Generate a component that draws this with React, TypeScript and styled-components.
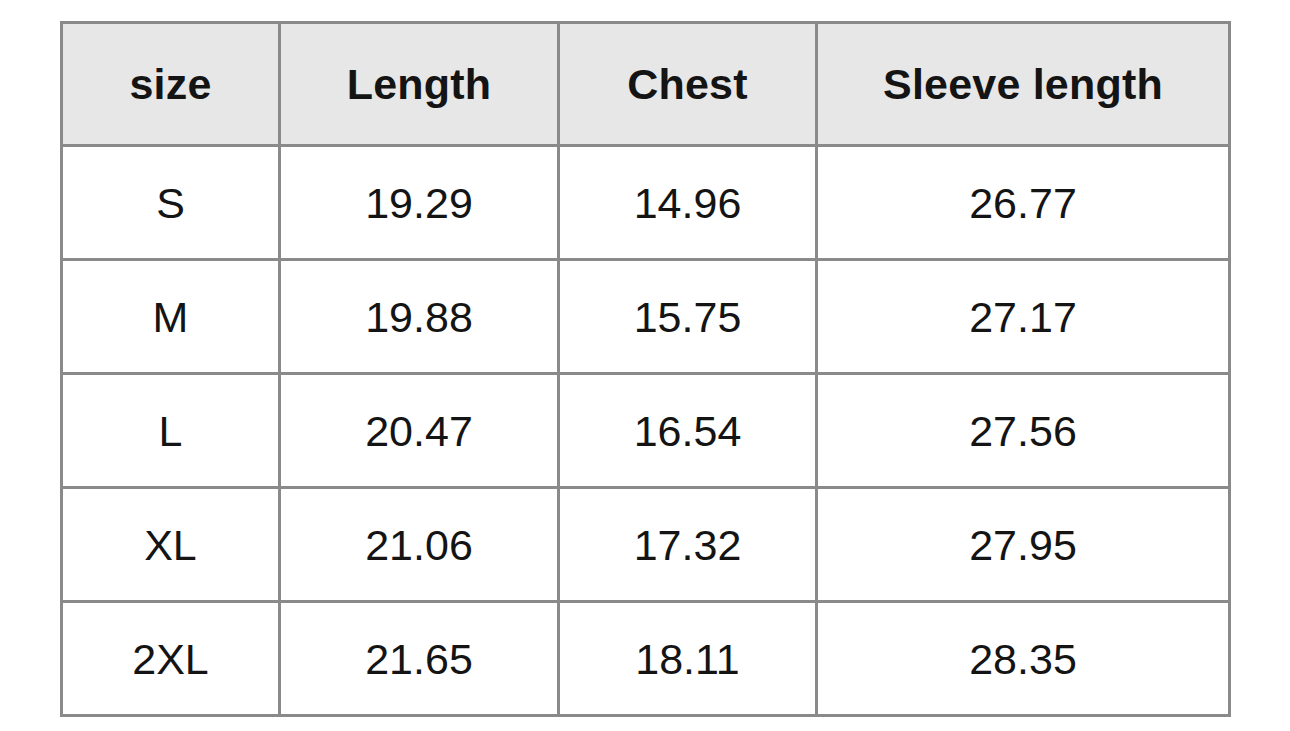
import React from "react";
import styled, { createGlobalStyle } from "styled-components";

const GlobalStyle = createGlobalStyle`
  html, body { margin: 0; padding: 0; background: #ffffff; }
  body { font-family: "Liberation Sans", Arial, Helvetica, sans-serif; }
`;

const Page = styled.div`
  width: 1290px;
  height: 731px;
  box-sizing: border-box;
  padding: 21px 0 0 60px;
  background: #ffffff;
`;

const Grid = styled.div`
  display: grid;
  grid-template-columns: 218px 279px 258px 413px;
  grid-template-rows: 123px repeat(5, 114px);
  width: max-content;
  border-left: 3px solid #8a8a8a;
  border-top: 3px solid #8a8a8a;
`;

const Cell = styled.div<{ $head?: boolean }>`
  box-sizing: border-box;
  border-right: 3px solid #8a8a8a;
  border-bottom: 3px solid #8a8a8a;
  display: flex;
  align-items: center;
  justify-content: center;
  background: ${(p) => (p.$head ? "#e7e7e7" : "#ffffff")};
  color: #141414;
  font-size: ${(p) => (p.$head ? "43px" : "43px")};
  font-weight: ${(p) => (p.$head ? 700 : 400)};
  letter-spacing: ${(p) => (p.$head ? "0.2px" : "0px")};
  padding-top: ${(p) => (p.$head ? "0" : "2px")};
`;

const headers = ["size", "Length", "Chest", "Sleeve length"];
const rows = [
  ["S", "19.29", "14.96", "26.77"],
  ["M", "19.88", "15.75", "27.17"],
  ["L", "20.47", "16.54", "27.56"],
  ["XL", "21.06", "17.32", "27.95"],
  ["2XL", "21.65", "18.11", "28.35"],
];

export default function App() {
  return (
    <>
      <GlobalStyle />
      <Page>
        <Grid role="table">
          {headers.map((h) => (
            <Cell key={h} $head role="columnheader">
              {h}
            </Cell>
          ))}
          {rows.map((r) =>
            r.map((v, i) => (
              <Cell key={r[0] + i} role="cell">
                {v}
              </Cell>
            ))
          )}
        </Grid>
      </Page>
    </>
  );
}
